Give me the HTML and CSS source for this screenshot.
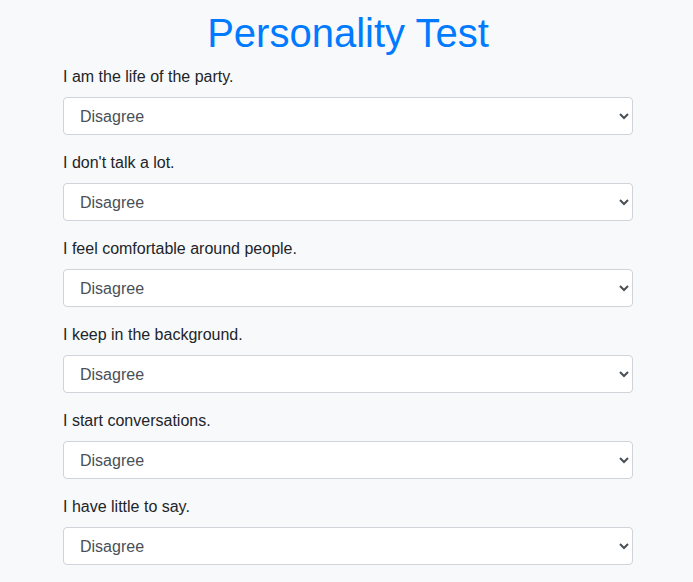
FILE: index.html
```html
<!DOCTYPE html>
<html>
<head>
<meta charset="utf-8">
<link rel="stylesheet" href="styles.css">
</head>
<body>
<div class="page">
  <h1 class="title">Personality Test</h1>
  <form class="form">
    <div class="group">
      <label class="label">I am the life of the party.</label>
      <select class="control"><option>Disagree</option><option>Agree</option></select>
    </div>
    <div class="group">
      <label class="label">I don't talk a lot.</label>
      <select class="control"><option>Disagree</option><option>Agree</option></select>
    </div>
    <div class="group">
      <label class="label">I feel comfortable around people.</label>
      <select class="control"><option>Disagree</option><option>Agree</option></select>
    </div>
    <div class="group">
      <label class="label">I keep in the background.</label>
      <select class="control"><option>Disagree</option><option>Agree</option></select>
    </div>
    <div class="group">
      <label class="label">I start conversations.</label>
      <select class="control"><option>Disagree</option><option>Agree</option></select>
    </div>
    <div class="group">
      <label class="label">I have little to say.</label>
      <select class="control"><option>Disagree</option><option>Agree</option></select>
    </div>
  </form>
</div>
</body>
</html>
```
FILE: styles.css
```css
html, body {
  margin: 0;
  background: #f8f9fa;
}
body {
  font-family: "Liberation Sans", Arial, sans-serif;
  font-size: 16px;
  line-height: 1.5;
  color: #212529;
}
.page {
  padding: 9px 60px 0 63px;
}
.title {
  margin: 0 0 8px;
  font-size: 40px;
  font-weight: 400;
  line-height: 1.2;
  color: #007bff;
  text-align: center;
}
.form {
  display: flex;
  flex-direction: column;
  gap: 16px;
}
.group {
  display: flex;
  flex-direction: column;
  gap: 8px;
}
.label {
  display: block;
}
.control {
  display: block;
  width: 100%;
  height: 38px;
  padding: 6px 12px;
  font-family: "Liberation Sans", Arial, sans-serif;
  font-size: 16px;
  line-height: 1.5;
  color: #495057;
  background-color: #fff;
  border: 1px solid #ced4da;
  border-radius: 4px;
  box-sizing: border-box;
}
```
